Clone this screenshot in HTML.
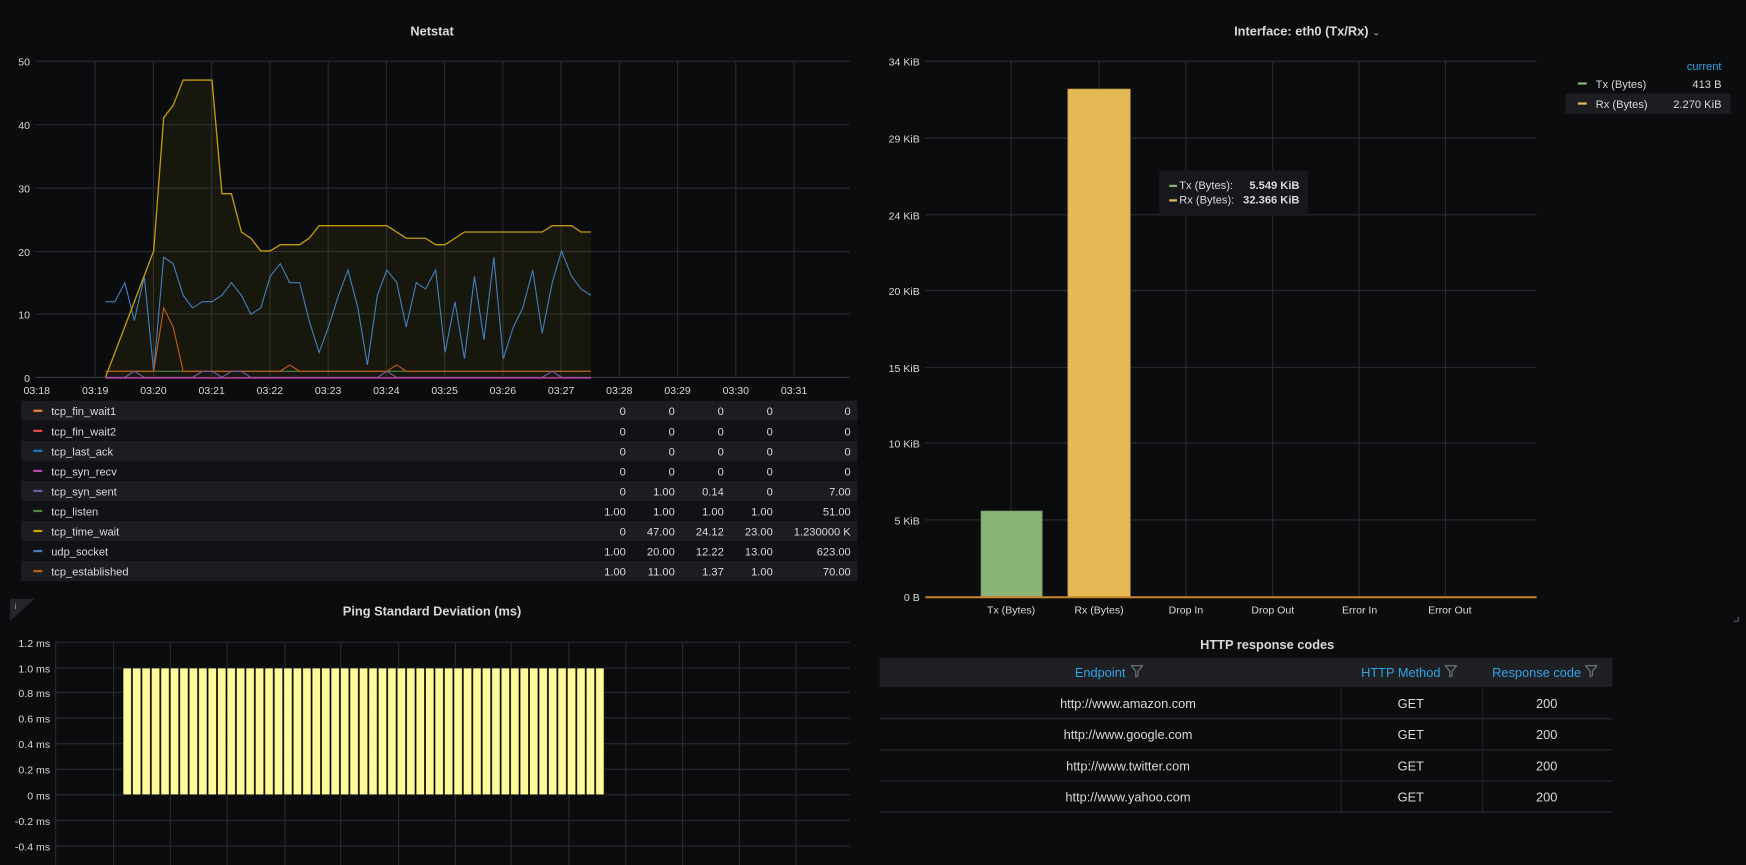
<!DOCTYPE html>
<html><head><meta charset="utf-8"><style>
html,body{margin:0;padding:0;background:#0b0c0e;width:1746px;height:865px;overflow:hidden}
svg{display:block}
text{font-family:"Liberation Sans",sans-serif;fill:#d8d9da}
.ax{font-size:9.5px;fill:#c7d0d9}
.t{font-size:11.5px;font-weight:bold;fill:#d8d9da}
.lg{font-size:10px;fill:#d8d9da}
.g line{stroke:#2a2b30;stroke-width:1}
</style></head><body>
<svg width="1746" height="865" viewBox="0 0 1568 777" preserveAspectRatio="none" xmlns="http://www.w3.org/2000/svg">
<defs>
<pattern id="pb" patternUnits="userSpaceOnUse" x="110" y="0" width="8.49" height="777">
<rect x="0.4" y="600" width="7.7" height="114" fill="#fffb9b" stroke="#000" stroke-width="0.7"/>
</pattern>
</defs>
<rect width="1568" height="777" fill="#0b0c0e"/>

<!-- NETSTAT -->
<text class="t" x="388" y="32" text-anchor="middle">Netstat</text>
<g class="g">
<line x1="32" y1="55" x2="763" y2="55"/><line x1="32" y1="112" x2="763" y2="112"/><line x1="32" y1="169" x2="763" y2="169"/><line x1="32" y1="226" x2="763" y2="226"/><line x1="32" y1="282" x2="763" y2="282"/>
<line x1="85.5" y1="55" x2="85.5" y2="339"/><line x1="137.8" y1="55" x2="137.8" y2="339"/><line x1="190.1" y1="55" x2="190.1" y2="339"/><line x1="242.4" y1="55" x2="242.4" y2="339"/><line x1="294.7" y1="55" x2="294.7" y2="339"/><line x1="347" y1="55" x2="347" y2="339"/><line x1="399.3" y1="55" x2="399.3" y2="339"/><line x1="451.6" y1="55" x2="451.6" y2="339"/><line x1="503.9" y1="55" x2="503.9" y2="339"/><line x1="556.2" y1="55" x2="556.2" y2="339"/><line x1="608.5" y1="55" x2="608.5" y2="339"/><line x1="660.8" y1="55" x2="660.8" y2="339"/><line x1="713.1" y1="55" x2="713.1" y2="339"/>
</g>
<line x1="32" y1="339" x2="763" y2="339" stroke="#3a3b40"/>
<g class="ax" text-anchor="end">
<text x="27" y="59">50</text><text x="27" y="116">40</text><text x="27" y="173">30</text><text x="27" y="230">20</text><text x="27" y="286">10</text><text x="27" y="343">0</text>
</g>
<g class="ax" text-anchor="middle">
<text x="33" y="354">03:18</text><text x="85.5" y="354">03:19</text><text x="137.8" y="354">03:20</text><text x="190.1" y="354">03:21</text><text x="242.4" y="354">03:22</text><text x="294.7" y="354">03:23</text><text x="347" y="354">03:24</text><text x="399.3" y="354">03:25</text><text x="451.6" y="354">03:26</text><text x="503.9" y="354">03:27</text><text x="556.2" y="354">03:28</text><text x="608.5" y="354">03:29</text><text x="660.8" y="354">03:30</text><text x="713.1" y="354">03:31</text>
</g>
<polygon fill="rgba(204,163,0,0.07)" points="94.7,339 138,225.4 147,105.7 155.5,94.6 164.5,71.9 190.4,71.9 199.3,174 207.8,174 216.8,208.4 225.3,214 234.2,225.4 242.7,225.4 251.7,219.8 269.1,219.8 277.6,214 286.6,202.7 347.4,202.7 364.8,214 382.2,214 391.2,219.8 399.7,219.8 417.1,208.4 486.9,208.4 495.9,202.7 513.3,202.7 521.8,208.4 530.7,208.4 530.7,339"/>
<polyline fill="none" stroke="#447ebc" stroke-width="1" points="94.7,271 103.2,271 112.1,253.9 120.6,288 129.6,248.5 138,333.5 147,231.1 155.5,236.8 164.5,265.3 172.9,276.6 181.9,271 190.4,271 199.3,265.3 207.8,253.9 216.8,265.3 225.3,282.3 234.2,276.6 242.7,248.2 251.7,236.8 260.1,253.9 269.1,253.9 277.6,288 286.6,316.5 295,293.7 304,265.3 312.5,242.5 321.4,276.6 329.9,327.8 338.9,265.3 347.4,242.5 356.3,253.9 364.8,293.7 373.8,253.9 382.2,259.6 391.2,242.5 399.7,316.5 408.6,271 417.1,322.2 426.1,248.2 434.6,305.1 443.5,231.1 452,322.2 461,293.7 469.5,276.6 478.4,242.5 486.9,299.4 495.9,253.9 504.3,225.4 513.3,248.2 521.8,259.6 530.7,265.3"/>
<polyline fill="none" stroke="#c29b0a" stroke-width="1.2" points="94.7,339 138,225.4 147,105.7 155.5,94.6 164.5,71.9 190.4,71.9 199.3,174 207.8,174 216.8,208.4 225.3,214 234.2,225.4 242.7,225.4 251.7,219.8 269.1,219.8 277.6,214 286.6,202.7 347.4,202.7 364.8,214 382.2,214 391.2,219.8 399.7,219.8 417.1,208.4 486.9,208.4 495.9,202.7 513.3,202.7 521.8,208.4 530.7,208.4"/>
<polyline fill="none" stroke="#508642" stroke-width="1" points="94.7,333.5 530.7,333.5"/>
<polyline fill="none" stroke="#c15c17" stroke-width="1" points="94.7,333.5 138,333.5 147,276.6 155.5,293.7 164.5,333.5 251.7,333.5 260.1,327.8 269.1,333.5 347.4,333.5 356.3,327.8 364.8,333.5 530.7,333.5"/>
<polyline fill="none" stroke="#705da0" stroke-width="1" points="94.7,339 112,339 120.6,333.5 129.6,339 172.9,339 181.9,333.5 190.4,333.5 199.3,339 207.8,333.5 216.8,333.5 225.3,339 339,339 347.4,333.5 356.3,339 486.9,339 495.9,333.5 504.3,339 530.7,339"/>
<line x1="94.7" y1="339.5" x2="530.7" y2="339.5" stroke="#ba43a9" stroke-width="1.2"/>

<!-- legend table -->
<rect x="19" y="360" width="751" height="18" fill="#1c1d21"/>
<rect x="19" y="378" width="751" height="18" fill="#111215"/>
<rect x="19" y="396" width="751" height="18" fill="#1c1d21"/>
<rect x="19" y="414" width="751" height="18" fill="#111215"/>
<rect x="19" y="432" width="751" height="18" fill="#1c1d21"/>
<rect x="19" y="450" width="751" height="18" fill="#111215"/>
<rect x="19" y="468" width="751" height="18" fill="#1c1d21"/>
<rect x="19" y="486" width="751" height="18" fill="#111215"/>
<rect x="19" y="504" width="751" height="18" fill="#1c1d21"/>
<g>
<rect x="30" y="368" width="8" height="2" fill="#ef843c"/><rect x="30" y="386" width="8" height="2" fill="#e24d42"/><rect x="30" y="404" width="8" height="2" fill="#1f78c1"/><rect x="30" y="422" width="8" height="2" fill="#ba43a9"/><rect x="30" y="440" width="8" height="2" fill="#705da0"/><rect x="30" y="458" width="8" height="2" fill="#508642"/><rect x="30" y="476" width="8" height="2" fill="#cca300"/><rect x="30" y="494" width="8" height="2" fill="#447ebc"/><rect x="30" y="512" width="8" height="2" fill="#c15c17"/>
</g>
<g class="lg">
<text x="46" y="373">tcp_fin_wait1</text><text x="46" y="391">tcp_fin_wait2</text><text x="46" y="409">tcp_last_ack</text><text x="46" y="427">tcp_syn_recv</text><text x="46" y="445">tcp_syn_sent</text><text x="46" y="463">tcp_listen</text><text x="46" y="481">tcp_time_wait</text><text x="46" y="499">udp_socket</text><text x="46" y="517">tcp_established</text>
</g>
<g class="lg" text-anchor="end">
<text x="562" y="373">0</text><text x="606" y="373">0</text><text x="650" y="373">0</text><text x="694" y="373">0</text><text x="764" y="373">0</text>
<text x="562" y="391">0</text><text x="606" y="391">0</text><text x="650" y="391">0</text><text x="694" y="391">0</text><text x="764" y="391">0</text>
<text x="562" y="409">0</text><text x="606" y="409">0</text><text x="650" y="409">0</text><text x="694" y="409">0</text><text x="764" y="409">0</text>
<text x="562" y="427">0</text><text x="606" y="427">0</text><text x="650" y="427">0</text><text x="694" y="427">0</text><text x="764" y="427">0</text>
<text x="562" y="445">0</text><text x="606" y="445">1.00</text><text x="650" y="445">0.14</text><text x="694" y="445">0</text><text x="764" y="445">7.00</text>
<text x="562" y="463">1.00</text><text x="606" y="463">1.00</text><text x="650" y="463">1.00</text><text x="694" y="463">1.00</text><text x="764" y="463">51.00</text>
<text x="562" y="481">0</text><text x="606" y="481">47.00</text><text x="650" y="481">24.12</text><text x="694" y="481">23.00</text><text x="764" y="481">1.230000 K</text>
<text x="562" y="499">1.00</text><text x="606" y="499">20.00</text><text x="650" y="499">12.22</text><text x="694" y="499">13.00</text><text x="764" y="499">623.00</text>
<text x="562" y="517">1.00</text><text x="606" y="517">11.00</text><text x="650" y="517">1.37</text><text x="694" y="517">1.00</text><text x="764" y="517">70.00</text>
</g>

<!-- PING -->
<polygon points="9,538 31,538 9,558" fill="#25262b"/>
<text x="13" y="547" style="font-size:7px;fill:#9fa7b3">i</text>
<text class="t" x="388" y="553" text-anchor="middle">Ping Standard Deviation (ms)</text>
<g class="g">
<line x1="50" y1="577" x2="763" y2="577"/><line x1="50" y1="600" x2="763" y2="600"/><line x1="50" y1="622" x2="763" y2="622"/><line x1="50" y1="645" x2="763" y2="645"/><line x1="50" y1="668" x2="763" y2="668"/><line x1="50" y1="691" x2="763" y2="691"/><line x1="50" y1="714" x2="763" y2="714"/><line x1="50" y1="737" x2="763" y2="737"/><line x1="50" y1="760" x2="763" y2="760"/>
<line x1="50" y1="577" x2="50" y2="777"/><line x1="102" y1="577" x2="102" y2="777"/><line x1="153" y1="577" x2="153" y2="777"/><line x1="204" y1="577" x2="204" y2="777"/><line x1="256" y1="577" x2="256" y2="777"/><line x1="306" y1="577" x2="306" y2="777"/><line x1="358" y1="577" x2="358" y2="777"/><line x1="409" y1="577" x2="409" y2="777"/><line x1="459" y1="577" x2="459" y2="777"/><line x1="511" y1="577" x2="511" y2="777"/><line x1="562" y1="577" x2="562" y2="777"/><line x1="613" y1="577" x2="613" y2="777"/><line x1="664" y1="577" x2="664" y2="777"/><line x1="715" y1="577" x2="715" y2="777"/>
</g>
<g class="ax" text-anchor="end">
<text x="45" y="581">1.2 ms</text><text x="45" y="604">1.0 ms</text><text x="45" y="626">0.8 ms</text><text x="45" y="649">0.6 ms</text><text x="45" y="672">0.4 ms</text><text x="45" y="695">0.2 ms</text><text x="45" y="718">0 ms</text><text x="45" y="741">-0.2 ms</text><text x="45" y="764">-0.4 ms</text>
</g>
<rect x="110" y="599" width="433" height="116" fill="url(#pb)"/>

<!-- INTERFACE -->
<text class="t" x="1174" y="32" text-anchor="middle">Interface: eth0 (Tx/Rx) <tspan style="font-size:9px;font-weight:normal;fill:#9fa7b3">⌄</tspan></text>
<g class="g">
<line x1="831" y1="55" x2="1380" y2="55"/><line x1="831" y1="124" x2="1380" y2="124"/><line x1="831" y1="193" x2="1380" y2="193"/><line x1="831" y1="261" x2="1380" y2="261"/><line x1="831" y1="330" x2="1380" y2="330"/><line x1="831" y1="398" x2="1380" y2="398"/><line x1="831" y1="467" x2="1380" y2="467"/>
<line x1="908" y1="55" x2="908" y2="536"/><line x1="987" y1="55" x2="987" y2="536"/><line x1="1065" y1="55" x2="1065" y2="536"/><line x1="1143" y1="55" x2="1143" y2="536"/><line x1="1220.5" y1="55" x2="1220.5" y2="536"/><line x1="1298" y1="55" x2="1298" y2="536"/>
</g>
<g class="ax" text-anchor="end">
<text x="826" y="59">34 KiB</text><text x="826" y="128">29 KiB</text><text x="826" y="197">24 KiB</text><text x="826" y="265">20 KiB</text><text x="826" y="334">15 KiB</text><text x="826" y="402">10 KiB</text><text x="826" y="471">5 KiB</text><text x="826" y="540">0 B</text>
</g>
<rect x="881" y="459" width="55" height="77" fill="#89b377" stroke="#6c9360" stroke-width="0.6"/>
<rect x="959" y="80" width="56" height="456" fill="#e5b954" stroke="#c9a040" stroke-width="0.6"/>
<line x1="831" y1="536.5" x2="1380" y2="536.5" stroke="#c8862a" stroke-width="1.8"/>
<g class="ax" text-anchor="middle">
<text x="908" y="551">Tx (Bytes)</text><text x="987" y="551">Rx (Bytes)</text><text x="1065" y="551">Drop In</text><text x="1143" y="551">Drop Out</text><text x="1221" y="551">Error In</text><text x="1302" y="551">Error Out</text>
</g>
<rect x="1041" y="153" width="134" height="40" rx="2" fill="#17181c"/>
<rect x="1050" y="166" width="7" height="2" fill="#89b377"/><rect x="1050" y="179" width="7" height="2" fill="#e5b954"/>
<g class="lg"><text x="1059" y="170">Tx (Bytes):</text><text x="1059" y="183">Rx (Bytes):</text></g>
<g class="lg" text-anchor="end" style="font-weight:bold"><text x="1167" y="170">5.549 KiB</text><text x="1167" y="183">32.366 KiB</text></g>

<text x="1546" y="63" text-anchor="end" style="font-size:10px;fill:#33a2e5">current</text>
<rect x="1406" y="84" width="148" height="18" fill="#1c1d21"/>
<rect x="1417" y="74" width="8" height="2" fill="#89b377"/><rect x="1417" y="92" width="8" height="2" fill="#e5b954"/>
<g class="lg"><text x="1433" y="79">Tx (Bytes)</text><text x="1433" y="97">Rx (Bytes)</text></g>
<g class="lg" text-anchor="end"><text x="1546" y="79">413 B</text><text x="1546" y="97">2.270 KiB</text></g>
<path d="M1557 558 L1561 558 L1561 554" stroke="#6e7177" fill="none" stroke-width="0.8"/>

<!-- HTTP -->
<text class="t" x="1138" y="583" text-anchor="middle">HTTP response codes</text>
<rect x="790" y="591" width="658" height="26" fill="#1f2024"/>
<g style="font-size:11.5px" text-anchor="middle">
<text x="988" y="608" style="fill:#33a2e5">Endpoint</text>
<text x="1258" y="608" style="fill:#33a2e5">HTTP Method</text>
<text x="1380" y="608" style="fill:#33a2e5">Response code</text>
</g>
<g fill="none" stroke="#7b8087" stroke-width="0.9">
<path d="M1016 598 h10 l-4 5 v4 l-2 1 v-5 z"/>
<path d="M1298 598 h10 l-4 5 v4 l-2 1 v-5 z"/>
<path d="M1424 598 h10 l-4 5 v4 l-2 1 v-5 z"/>
</g>
<line x1="1204.5" y1="591" x2="1204.5" y2="729" stroke="#202226"/>
<line x1="1331.5" y1="591" x2="1331.5" y2="729" stroke="#202226"/>
<g stroke="#202226" stroke-width="1.5">
<line x1="790" y1="645.5" x2="1448" y2="645.5"/><line x1="790" y1="673.5" x2="1448" y2="673.5"/><line x1="790" y1="701.5" x2="1448" y2="701.5"/><line x1="790" y1="729.5" x2="1448" y2="729.5"/>
</g>
<g style="font-size:11.5px" text-anchor="middle">
<text x="1013" y="636">http://www.amazon.com</text><text x="1267" y="636">GET</text><text x="1389" y="636">200</text>
<text x="1013" y="664">http://www.google.com</text><text x="1267" y="664">GET</text><text x="1389" y="664">200</text>
<text x="1013" y="692">http://www.twitter.com</text><text x="1267" y="692">GET</text><text x="1389" y="692">200</text>
<text x="1013" y="720">http://www.yahoo.com</text><text x="1267" y="720">GET</text><text x="1389" y="720">200</text>
</g>
</svg>
</body></html>
